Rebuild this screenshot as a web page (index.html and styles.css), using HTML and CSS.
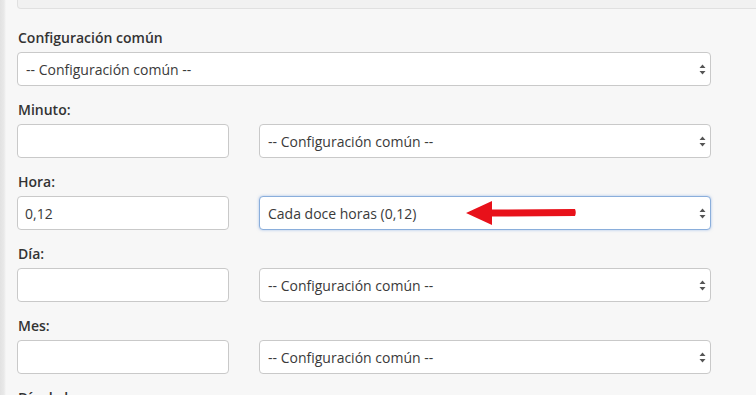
FILE: index.html
```html
<!DOCTYPE html>
<html lang="es">
<head>
    <meta charset="UTF-8">
    <meta name="viewport" content="width=device-width, initial-scale=1.0">
    <title>Cron</title>
    <link rel="stylesheet" href="styles.css">
</head>
<body>
    <div class="page">
        <div class="well"></div>

        <!-- Common settings -->
        <div class="form-group">
            <label class="field-label">Configuración común</label>
            <div class="select-wrap">
                <select class="field">
                    <option>-- Configuración común --</option>
                </select>
                <svg class="caret" width="7" height="11" viewBox="0 0 7 11"><path d="M3.5 0.5 L6.5 4 L0.5 4 Z M3.5 10.5 L6.5 7 L0.5 7 Z" fill="#555"/></svg>
            </div>
        </div>

        <div class="form-group">
            <label class="field-label">Minuto:</label>
            <div class="row">
                <input class="field" type="text" value="">
                <div class="select-wrap">
                    <select class="field">
                        <option>-- Configuración común --</option>
                    </select>
                    <svg class="caret" width="7" height="11" viewBox="0 0 7 11"><path d="M3.5 0.5 L6.5 4 L0.5 4 Z M3.5 10.5 L6.5 7 L0.5 7 Z" fill="#555"/></svg>
                </div>
            </div>
        </div>

        <div class="form-group">
            <label class="field-label">Hora:</label>
            <div class="row">
                <input class="field" type="text" value="0,12">
                <div class="select-wrap">
                    <select class="field focused">
                        <option>Cada doce horas (0,12)</option>
                    </select>
                    <svg class="caret" width="7" height="11" viewBox="0 0 7 11"><path d="M3.5 0.5 L6.5 4 L0.5 4 Z M3.5 10.5 L6.5 7 L0.5 7 Z" fill="#555"/></svg>
                    <!-- annotation arrow -->
                    <svg class="pointer" width="112" height="28" viewBox="0 0 112 28"><path d="M0 14 L26 2 L26 10.5 L109 10 Q110.5 13.5 109 17 L26 17.5 L26 26 Z" fill="#e8111a"/></svg>
                </div>
            </div>
        </div>

        <div class="form-group">
            <label class="field-label">Día:</label>
            <div class="row">
                <input class="field" type="text" value="">
                <div class="select-wrap">
                    <select class="field">
                        <option>-- Configuración común --</option>
                    </select>
                    <svg class="caret" width="7" height="11" viewBox="0 0 7 11"><path d="M3.5 0.5 L6.5 4 L0.5 4 Z M3.5 10.5 L6.5 7 L0.5 7 Z" fill="#555"/></svg>
                </div>
            </div>
        </div>

        <div class="form-group">
            <label class="field-label">Mes:</label>
            <div class="row">
                <input class="field" type="text" value="">
                <div class="select-wrap">
                    <select class="field">
                        <option>-- Configuración común --</option>
                    </select>
                    <svg class="caret" width="7" height="11" viewBox="0 0 7 11"><path d="M3.5 0.5 L6.5 4 L0.5 4 Z M3.5 10.5 L6.5 7 L0.5 7 Z" fill="#555"/></svg>
                </div>
            </div>
        </div>

        <div class="form-group">
            <label class="field-label">Día de la semana:</label>
        </div>
    </div>
</body>
</html>
```

FILE: styles.css
```css
* {
    margin: 0;
    padding: 0;
    box-sizing: border-box;
}

body {
    font-family: 'Open Sans', 'Liberation Sans', sans-serif;
    font-size: 14px;
    color: #333;
    background: linear-gradient(to right, #e2e2e2 0, #e9e9e9 4px, #f7f7f7 6px);
    height: 100vh;
    overflow: hidden;
}

.page {
    padding: 0 45px 0 17px;
}

.well {
    height: 9px;
    margin-right: -46px;
    margin-bottom: 20px;
    background: #f1f1f1;
    border: 1px solid #e0e0e0;
    border-top: none;
    border-radius: 0 0 0 4px;
}

.form-group {
    margin-bottom: 15px;
}

.field-label {
    display: block;
    font-weight: 600;
    line-height: 18px;
    margin-bottom: 5px;
    padding-left: 1px;
}

.row {
    display: grid;
    grid-template-columns: 212px 1fr;
    gap: 30px;
}

.field {
    display: block;
    width: 100%;
    height: 34px;
    padding: 0 8px;
    font-family: inherit;
    font-size: 14px;
    color: #3a3a3a;
    background: #fff;
    border: 1px solid #c9c9c9;
    border-radius: 4px;
    appearance: none;
    -webkit-appearance: none;
    outline: none;
}

input.field {
    padding-left: 7px;
}

.focused {
    border-color: #8aaedb;
    box-shadow: 0 0 3px rgba(102, 150, 220, 0.55);
}

.select-wrap {
    position: relative;
}

.caret {
    position: absolute;
    right: 5px;
    top: 12px;
}

.pointer {
    position: absolute;
    left: 207px;
    top: 3px;
}
```
